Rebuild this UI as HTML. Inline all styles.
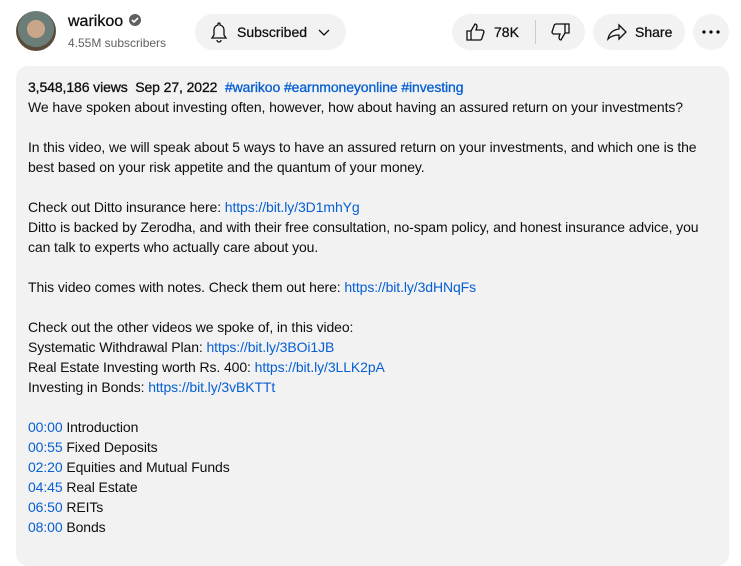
<!DOCTYPE html>
<html><head><style>
body{margin:0;width:741px;height:538px;overflow:hidden;background:#fff;font-family:"Liberation Sans",sans-serif;color:#0f0f0f;position:relative}
.a{position:absolute}
.btn{position:absolute;top:14px;height:36px;background:#f2f2f2;border-radius:18px;font-size:14px;font-weight:normal;display:flex;align-items:center;-webkit-text-stroke:0.25px #0f0f0f}
.box{position:absolute;left:16px;top:66px;width:713px;height:500px;background:#f2f2f2;border-radius:12px}
.txt{position:absolute;left:28px;top:77px;width:690px;font-size:14px;line-height:20px;color:#0f0f0f;letter-spacing:-0.1px}
a{color:#065fd4;text-decoration:none}
.m{-webkit-text-stroke:0.3px currentColor}
</style></head><body>
<div class="a" style="left:16px;top:11px;width:40px;height:40px;border-radius:50%;background:radial-gradient(circle at 50% 45%,#c9a58a 0 30%,#6a7d78 31% 60%,#5a4a3a 61%)"></div>
<div class="a m" style="left:68px;top:13px;font-size:16px">warikoo <svg width="14" height="14" viewBox="0 0 14 14" style="vertical-align:-1px"><circle cx="7" cy="7" r="6" fill="#606060"/><path d="M4 7l2 2 4-4" stroke="#fff" stroke-width="1.6" fill="none"/></svg></div>
<div class="a" style="left:68px;top:36px;font-size:12px;color:#606060">4.55M subscribers</div>
<div class="btn" style="left:195px;width:151px">
<svg style="margin-left:12px" width="24" height="24" viewBox="0 0 24 24"><path d="M12 3a1 1 0 0 1 1 1v1a5 5 0 0 1 4 5v5l2 3H5l2-3v-5a5 5 0 0 1 4-5V4a1 1 0 0 1 1-1zM10 20a2 2 0 0 0 4 0" stroke="#0f0f0f" stroke-width="1.3" fill="none"/></svg>
<span style="margin-left:6px">Subscribed</span>
<svg style="margin-left:9px" width="16" height="16" viewBox="0 0 16 16"><path d="M3 6l5 5 5-5" stroke="#0f0f0f" stroke-width="1.3" fill="none"/></svg></div>
<div class="btn" style="left:452px;width:133px">
<svg style="margin-left:12px" width="24" height="24" viewBox="0 0 24 24"><path d="M3 11h4v9H3zM7 11l4-7c2 0 2 2 2 3l-1 3h6c1 0 2 1 2 2l-2 6c0 1-1 2-2 2H7" stroke="#0f0f0f" stroke-width="1.3" fill="none"/></svg>
<span style="margin-left:6px">78K</span>
<div style="width:1px;height:24px;background:#ccc;margin-left:16px"></div>
<svg style="margin-left:12px" width="24" height="24" viewBox="0 0 24 24"><path d="M21 13h-4V4h4zM17 13l-4 7c-2 0-2-2-2-3l1-3H6c-1 0-2-1-2-2l2-6c0-1 1-2 2-2h9" stroke="#0f0f0f" stroke-width="1.3" fill="none"/></svg></div>
<div class="btn" style="left:593px;width:92px">
<svg style="margin-left:12px" width="24" height="24" viewBox="0 0 24 24"><path d="M14 5l7 7-7 7v-4c-5 0-8 1-11 4 1-5 4-9 11-10z" stroke="#0f0f0f" stroke-width="1.3" fill="none"/></svg>
<span style="margin-left:6px">Share</span></div>
<div class="btn" style="left:693px;width:36px;justify-content:center;line-height:0"><svg width="20" height="6" viewBox="0 0 20 6"><circle cx="3" cy="3" r="1.6"/><circle cx="10" cy="3" r="1.6"/><circle cx="17" cy="3" r="1.6"/></svg></div>
<div class="box"></div>
<div class="txt"><span class="m">3,548,186 views&nbsp; Sep 27, 2022</span>&nbsp; <a class="m">#warikoo #earnmoneyonline #investing</a><br>
We have spoken about investing often, however, how about having an assured return on your investments?<br><br>
In this video, we will speak about 5 ways to have an assured return on your investments, and which one is the best based on your risk appetite and the quantum of your money.<br><br>
Check out Ditto insurance here: <a>https://bit.ly/3D1mhYg</a><br>
Ditto is backed by Zerodha, and with their free consultation, no-spam policy, and honest insurance advice, you can talk to experts who actually care about you.<br><br>
This video comes with notes. Check them out here: <a>https://bit.ly/3dHNqFs</a><br><br>
Check out the other videos we spoke of, in this video:<br>
Systematic Withdrawal Plan: <a>https://bit.ly/3BOi1JB</a><br>
Real Estate Investing worth Rs. 400: <a>https://bit.ly/3LLK2pA</a><br>
Investing in Bonds: <a>https://bit.ly/3vBKTTt</a><br><br>
<a>00:00</a> Introduction<br>
<a>00:55</a> Fixed Deposits<br>
<a>02:20</a> Equities and Mutual Funds<br>
<a>04:45</a> Real Estate<br>
<a>06:50</a> REITs<br>
<a>08:00</a> Bonds</div>
</body></html>
